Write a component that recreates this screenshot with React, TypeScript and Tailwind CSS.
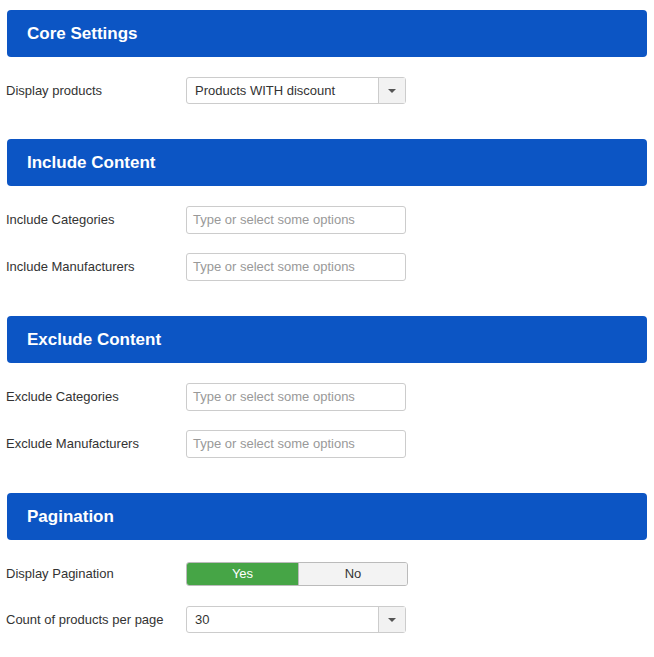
import { ReactNode } from "react";

const font = { fontFamily: '"Liberation Sans", Arial, sans-serif' };

function Header({ title }: { title: string }) {
  return (
    <div className="flex h-[47px] items-center rounded-[4px] bg-[#0c55c4] px-5">
      <h2 className="text-[17px] font-bold text-white">{title}</h2>
    </div>
  );
}

function Row({ label, children, mt }: { label: string; children: ReactNode; mt: string }) {
  return (
    <div className={`flex items-center ${mt}`}>
      <label className="w-[186px] shrink-0 pl-[6px] text-[13px] text-[#333]">{label}</label>
      {children}
    </div>
  );
}

function Select({ value }: { value: string }) {
  return (
    <div className="flex h-[27px] w-[220px] items-stretch rounded-[3px] border border-[#ccc] bg-white">
      <span className="flex flex-1 items-center pl-2 text-[13px] text-[#333]">{value}</span>
      <span className="flex w-[27px] items-center justify-center border-l border-[#ccc] bg-[#f2f2f2]">
        <span className="h-0 w-0 border-x-[4px] border-t-[4px] border-x-transparent border-t-[#555]" />
      </span>
    </div>
  );
}

function Chosen() {
  return (
    <div className="flex h-[28px] w-[220px] items-center rounded-[3px] border border-[#ccc] bg-white pl-[6px] text-[13px] text-[#999]">
      Type or select some options
    </div>
  );
}

export default function App() {
  return (
    <div className="bg-white px-[7px] pt-[10px] pb-4" style={font}>
      <Header title="Core Settings" />
      <div className="-mx-[7px]">
        <Row label="Display products" mt="mt-[20px]">
          <Select value="Products WITH discount" />
        </Row>
      </div>

      <div className="mt-[35px]">
        <Header title="Include Content" />
      </div>
      <div className="-mx-[7px]">
        <Row label="Include Categories" mt="mt-[20px]">
          <Chosen />
        </Row>
        <Row label="Include Manufacturers" mt="mt-[19px]">
          <Chosen />
        </Row>
      </div>

      <div className="mt-[35px]">
        <Header title="Exclude Content" />
      </div>
      <div className="-mx-[7px]">
        <Row label="Exclude Categories" mt="mt-[20px]">
          <Chosen />
        </Row>
        <Row label="Exclude Manufacturers" mt="mt-[19px]">
          <Chosen />
        </Row>
      </div>

      <div className="mt-[35px]">
        <Header title="Pagination" />
      </div>
      <div className="-mx-[7px]">
        <Row label="Display Pagination" mt="mt-[22px]">
          <div className="flex h-[24px] w-[222px] overflow-hidden rounded-[3px] border border-[#bbb] text-[13px]">
            <span className="flex w-[111px] items-center justify-center bg-[#46a546] text-white">Yes</span>
            <span className="flex flex-1 items-center justify-center border-l border-[#bbb] bg-[#f3f3f3] text-[#333]">
              No
            </span>
          </div>
        </Row>
        <Row label="Count of products per page" mt="mt-[20px]">
          <Select value="30" />
        </Row>
      </div>
    </div>
  );
}
